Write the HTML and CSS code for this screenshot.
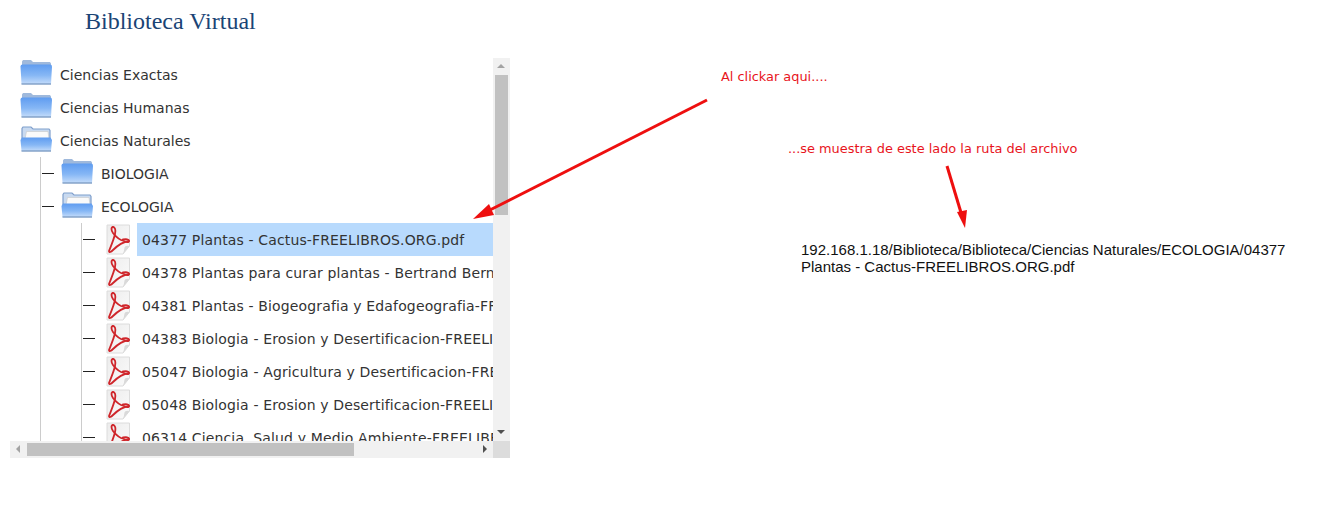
FILE: index.html
```html
<!DOCTYPE html>
<html lang="es">
<head>
<meta charset="utf-8">
<title>Biblioteca Virtual</title>
<link rel="stylesheet" href="styles.css">
</head>
<body>
<svg class="defs" aria-hidden="true">
  <defs>
    <linearGradient id="fb" x1="0" y1="0" x2="0" y2="1">
      <stop offset="0" stop-color="#5f9cf0"/>
      <stop offset=".55" stop-color="#86b7f5"/>
      <stop offset="1" stop-color="#c4dcfa"/>
    </linearGradient>
    <linearGradient id="pg" x1="0" y1="0" x2="1" y2="1">
      <stop offset="0" stop-color="#ececec"/>
      <stop offset="1" stop-color="#fbfbfb"/>
    </linearGradient>
    <symbol id="folder" viewBox="0 2 32 27">
      <path d="M2 6V3.500L3 2h8l2 2h17l1 1.500V8H2z" fill="#9fb9dc"/>
      <path d="M0.500 8.500Q0.500 6.500 2.500 6.500H30Q32 6.500 32 8.500L31 26H1.500z" fill="url(#fb)"/>
      <path d="M1.500 26H31" stroke="#7d9cc4" stroke-width="1.400"/>
    </symbol>
    <symbol id="folder-open" viewBox="0 1 32 27">
      <path d="M2 14V3.500L3 2h8l2 2h16l1 1.500V14z" fill="#c9daf0" stroke="#7f9fcc" stroke-width="1.200"/>
      <path d="M5 14L6.500 6.500H28L29 14z" fill="#fafafa" stroke="#c8c8c8" stroke-width=".6"/>
      <path d="M0.500 15L2 12.500H30.500L32 15L31 26H1.500z" fill="url(#fb)"/>
      <path d="M1.500 26H31" stroke="#7d9cc4" stroke-width="1.400"/>
    </symbol>
    <symbol id="pdf" viewBox="0 0 25 31">
      <path d="M1 1H23.500V22L17 30H1z" fill="url(#pg)" stroke="#dcdcdc"/>
      <path d="M23.500 22Q19 21 18.500 23.500Q18 27 17 30z" fill="#d9d9d9"/>
      <g fill="none" stroke="#cf262b" stroke-width="1.800" stroke-linecap="round">
        <path d="M7 3C9 3 10 6 9 10C8 15 5 22 3 27C3 29 5 28 7 26C11 22 17 18 23 17"/>
        <path d="M7 3C5 3 5 6 7 9C10 13 14 16 18 17C20 18 23 19 23 17C23 15 20 15 17 15.500"/>
      </g>
    </symbol>
  </defs>
</svg>

<header class="page-head">
  <h1 class="title">Biblioteca Virtual</h1>
</header>

<main class="content">
  <section class="panel">
    <div class="viewport">
      <div class="tree">
        <div class="node"><svg class="ico-folder"><use href="#folder"/></svg><span class="label">Ciencias Exactas</span></div>
        <div class="node"><svg class="ico-folder"><use href="#folder"/></svg><span class="label">Ciencias Humanas</span></div>
        <div class="node"><svg class="ico-folder"><use href="#folder-open"/></svg><span class="label">Ciencias Naturales</span></div>
        <div class="children level1">
          <div class="node"><i class="dash"></i><svg class="ico-folder"><use href="#folder"/></svg><span class="label">BIOLOGIA</span></div>
          <div class="node"><i class="dash"></i><svg class="ico-folder"><use href="#folder-open"/></svg><span class="label">ECOLOGIA</span></div>
          <div class="children level2">
            <div class="node"><i class="dash"></i><svg class="ico-pdf"><use href="#pdf"/></svg><span class="file selected">04377 Plantas - Cactus-FREELIBROS.ORG.pdf</span></div>
            <div class="node"><i class="dash"></i><svg class="ico-pdf"><use href="#pdf"/></svg><span class="file">04378 Plantas para curar plantas - Bertrand Bernard-FREELIBROS.ORG.pdf</span></div>
            <div class="node"><i class="dash"></i><svg class="ico-pdf"><use href="#pdf"/></svg><span class="file">04381 Plantas - Biogeografia y Edafogeografia-FREELIBROS.ORG.pdf</span></div>
            <div class="node"><i class="dash"></i><svg class="ico-pdf"><use href="#pdf"/></svg><span class="file">04383 Biologia - Erosion y Desertificacion-FREELIBROS.ORG.pdf</span></div>
            <div class="node"><i class="dash"></i><svg class="ico-pdf"><use href="#pdf"/></svg><span class="file">05047 Biologia - Agricultura y Desertificacion-FREELIBROS.ORG.pdf</span></div>
            <div class="node"><i class="dash"></i><svg class="ico-pdf"><use href="#pdf"/></svg><span class="file">05048 Biologia - Erosion y Desertificacion-FREELIBROS.ORG.pdf</span></div>
            <div class="node"><i class="dash"></i><svg class="ico-pdf"><use href="#pdf"/></svg><span class="file">06314 Ciencia, Salud y Medio Ambiente-FREELIBROS.ORG.pdf</span></div>
          </div>
        </div>
      </div>
    </div>
    <div class="bar bar-v">
      <i class="arrow arrow-up"></i>
      <div class="thumb-track-v"><div class="thumb thumb-v"></div></div>
      <i class="arrow arrow-down"></i>
    </div>
    <div class="bar bar-h">
      <i class="arrow arrow-left"></i>
      <div class="thumb-track-h"><div class="thumb thumb-h"></div></div>
      <i class="arrow arrow-right"></i>
    </div>
    <div class="corner"></div>
  </section>

  <p class="path">192.168.1.18/Biblioteca/Biblioteca/Ciencias Naturales/ECOLOGIA/04377 Plantas - Cactus-FREELIBROS.ORG.pdf</p>
</main>

<p class="note note-click">Al clickar aqui....</p>
<p class="note note-path">...se muestra de este lado la ruta del archivo</p>
<svg class="arrows" viewBox="0 0 1332 514" aria-hidden="true">
  <path d="M707 100L484 213" stroke="#ee0f0f" stroke-width="3" fill="none"/>
  <path d="M473 219L489 204L494 215z" fill="#ee0f0f"/>
  <path d="M947 166L962 216" stroke="#ee0f0f" stroke-width="3" fill="none"/>
  <path d="M965 228L957 212L967 210z" fill="#ee0f0f"/>
</svg>
</body>
</html>
```

FILE: styles.css
```css
* { box-sizing: border-box; }

html, body {
  margin: 0;
  padding: 0;
  background: #fff;
}

body {
  position: relative;
  width: 1332px;
  height: 514px;
  overflow: hidden;
}

.defs {
  position: absolute;
  width: 0;
  height: 0;
}

.page-head {
  height: 58px;
  padding: 7px 0 0 85px;
}

.title {
  margin: 0;
  font: 400 24px/28px "Liberation Serif", serif;
  color: #1a4475;
}

.content {
  display: flex;
  align-items: flex-start;
  padding-left: 10px;
}

.panel {
  display: grid;
  grid-template-columns: 483px 17px;
  grid-template-rows: 383px 17px;
  width: 500px;
  height: 400px;
  flex: none;
}

.viewport {
  overflow: hidden;
}

.tree {
  width: 800px;
  font: 14px/34px "DejaVu Sans", Verdana, sans-serif;
  color: #333;
}

.node {
  display: flex;
  align-items: center;
  height: 33px;
  padding-left: 10px;
  white-space: nowrap;
}

.ico-folder {
  flex: none;
  width: 32px;
  height: 27px;
  margin-right: 8px;
  margin-bottom: 2px;
}

.ico-pdf {
  flex: none;
  width: 25px;
  height: 31px;
  margin-right: 6px;
}

.children {
  border-left: 1px solid #ccc;
}

.children .node {
  padding-left: 0;
}

.level1 {
  margin-left: 30px;
}

.level2 {
  margin-left: 40px;
}

.dash {
  flex: none;
  width: 12px;
  height: 1px;
  margin-left: 1px;
  margin-right: 11px;
  background: #222;
}

.level1 > .node .dash {
  margin-left: 1px;
  margin-right: 7px;
}

.label {
  display: block;
}

.file {
  flex: 1;
  height: 33px;
  padding-left: 5px;
  letter-spacing: .14px;
}

.selected {
  background: #b8dafd;
}

.bar {
  display: flex;
  background: #f1f1f1;
}

.bar-v {
  flex-direction: column;
  align-items: center;
}

.bar-h {
  align-items: center;
}

.thumb-track-v {
  flex: 1;
  width: 100%;
  padding: 0 2px;
}

.thumb-track-h {
  flex: 1;
  height: 100%;
  padding: 2px 0;
}

.thumb {
  background: #c1c1c1;
}

.thumb-v {
  width: 13px;
  height: 140px;
}

.thumb-h {
  width: 327px;
  height: 13px;
}

.corner {
  background: #dcdcdc;
}

.arrow {
  flex: none;
  display: block;
  width: 17px;
  height: 17px;
  position: relative;
}

.arrow::before {
  content: "";
  position: absolute;
  left: 4px;
  top: 6px;
  border-style: solid;
  border-color: transparent;
}

.arrow-up::before {
  border-width: 0 4px 4px;
  border-bottom-color: #a3a3a3;
}

.arrow-down::before {
  border-width: 4px 4px 0;
  border-top-color: #505050;
}

.arrow-left::before {
  left: 6px;
  top: 4px;
  border-width: 4px 4px 4px 0;
  border-right-color: #a3a3a3;
}

.arrow-right::before {
  left: 7px;
  top: 4px;
  border-width: 4px 0 4px 4px;
  border-left-color: #505050;
}

.path {
  width: 492px;
  margin: 183px 0 0 291px;
  font: 15px/17px "Liberation Sans", Arial, sans-serif;
  color: #111;
}

.note {
  position: absolute;
  margin: 0;
  font: 12.9px/16px "DejaVu Sans", sans-serif;
  color: #e8141c;
  white-space: nowrap;
}

.note-click {
  left: 721px;
  top: 69px;
}

.note-path {
  left: 788px;
  top: 141px;
}

.arrows {
  position: absolute;
  left: 0;
  top: 0;
  width: 1332px;
  height: 514px;
  pointer-events: none;
}
```
